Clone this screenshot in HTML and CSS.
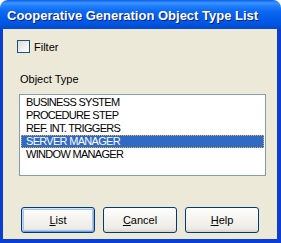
FILE: index.html
```html
<!DOCTYPE html>
<html>
  <head>
    <title>Cooperative Generation Object Type List</title>
    <link rel="stylesheet" href="styles.css">
  </head>
  <body>

    <div class="window">
      <div class="titlebar">Cooperative Generation Object Type List</div>

      <div class="client">
        <label class="filter">
          <span class="check"></span>
          <span>Filter</span>
        </label>

        <div class="group-label">Object Type</div>

        <div class="listbox">
          <div class="item">BUSINESS SYSTEM</div>
          <div class="item">PROCEDURE STEP</div>
          <div class="item">REF. INT. TRIGGERS</div>
          <div class="item selected">SERVER MANAGER</div>
          <div class="item">WINDOW MANAGER</div>
        </div>

        <div class="buttons">
          <div class="button default"><u>L</u>ist</div>
          <div class="button"><u>C</u>ancel</div>
          <div class="button"><u>H</u>elp</div>
        </div>
      </div>
    </div>

  </body>
</html>
```

FILE: styles.css
```css
body {
  margin: 0;
  font-family: "Liberation Sans", Arial, sans-serif;
  font-size: 11px;
  color: #000;
}

.window {
  width: 281px;
  height: 243px;
  display: flex;
  flex-direction: column;
  border-radius: 8px 8px 0 0;
  background: linear-gradient(180deg, #0A5FE8 0, #3D95FF 3px, #1F80FC 6px, #0B66F0 12px, #0058E6 22px, #0050D8 26px, #0848D0 29px, #0B3FD3 30px);
  overflow: hidden;
}

.titlebar {
  height: 29px;
  line-height: 31px;
  padding-left: 7px;
  color: #fff;
  font-size: 13px;
  font-weight: bold;
  text-shadow: 1px 1px 0 #0A1E80;
  white-space: nowrap;
}

.client {
  flex: 1;
  margin: 0 4px 4px 3px;
  padding: 11px 12px 0 14px;
  background: #ECE9D8;
  display: flex;
  flex-direction: column;
}

.filter {
  display: flex;
  align-items: center;
  gap: 4px;
  height: 13px;
}

.check {
  width: 11px;
  height: 11px;
  border: 1px solid #1C5180;
  background: linear-gradient(135deg, #DCDCD7, #FFFFFF);
}

.group-label {
  margin: 20px 0 0 3px;
  line-height: 13px;
}

.listbox {
  margin: 8px 0 0 2px;
  width: 243px;
  height: 78px;
  padding: 1px;
  border: 1px solid #7F9DB9;
  background: #fff;
}

.item {
  height: 13px;
  line-height: 13px;
  padding-left: 5px;
  letter-spacing: -0.7px;
  white-space: nowrap;
}

.selected {
  background: #316AC5;
  color: #fff;
  outline: 1px dotted #E8B040;
  outline-offset: -1px;
}

.buttons {
  display: flex;
  gap: 8px;
  margin: 31px 0 0 4px;
}

.button {
  width: 72px;
  height: 24px;
  line-height: 24px;
  text-align: center;
  border: 1px solid #003C74;
  border-radius: 3px;
  background: linear-gradient(180deg, #FFFFFF 0, #F6F5F1 40%, #ECEBE6 85%, #D8D2C6 100%);
}

.default {
  box-shadow: inset 0 1px 0 #CEE7FF, inset 1px 0 0 #BCD4F6, inset -1px 0 0 #89ADE4, inset 0 -1px 0 #69A1E5, inset 0 0 0 2px #A9C6F0;
}
```
